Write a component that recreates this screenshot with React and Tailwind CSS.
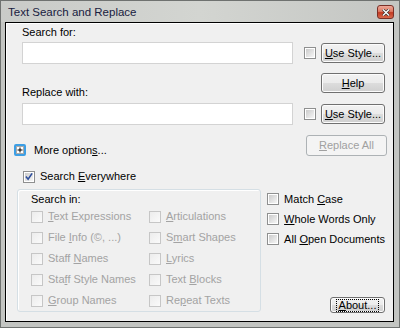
import React from 'react';

const U = ({ children }) => <span className="underline underline-offset-[1px]">{children}</span>;

function CheckBox({ checked, disabled }) {
  if (disabled) {
    return <div className="w-[12px] h-[12px] shrink-0 border border-[#c6c6c6] bg-gradient-to-br from-[#ececec] to-[#fafafa]" />;
  }
  return (
    <div className="w-[12px] h-[12px] shrink-0 border border-[#8e8f8f] bg-white p-[1px]">
      <div className="w-full h-full bg-gradient-to-br from-[#cbcbcb] to-[#f6f6f6] flex items-center justify-center">
        {checked && (
          <svg width="9" height="9" viewBox="0 0 9 9">
            <path d="M1 4.5 L3.5 7.5 L8 1" fill="none" stroke="#2d4e9c" strokeWidth="1.8" />
          </svg>
        )}
      </div>
    </div>
  );
}

function Btn({ children, className = '', disabled, focus }) {
  if (disabled) {
    return (
      <div className={`flex items-center justify-center rounded-[3px] border border-[#adb2b5] bg-[#f4f4f4] text-[#a0a0a0] ${className}`}>
        {children}
      </div>
    );
  }
  return (
    <div className={`rounded-[3px] border border-[#707070] shadow-[inset_0_0_0_1px_#fcfcfc] bg-[linear-gradient(to_bottom,#f2f2f2_0%,#ebebeb_50%,#dddddd_50%,#cfcfcf_100%)] flex items-center justify-center text-black ${className}`}>
      {focus ? (
        <span className="border border-dotted border-black px-[2px] leading-[11px]">{children}</span>
      ) : (
        children
      )}
    </div>
  );
}

function Row({ label, disabled, checked, className = '' }) {
  return (
    <div className={`flex items-center gap-[5px] ${disabled ? 'text-[#a3a3a3]' : 'text-black'} ${className}`}>
      <CheckBox disabled={disabled} checked={checked} />
      <span className="leading-[13px] whitespace-nowrap">{label}</span>
    </div>
  );
}

export default function App() {
  return (
    <div className="w-[400px] h-[328px] bg-[#c3c5c2] border border-[#6f7270] flex flex-col font-['Liberation_Sans',Arial,sans-serif] text-[11px] overflow-hidden">
      {/* title bar */}
      <div className="h-[21px] shrink-0 flex items-start justify-between bg-gradient-to-r from-[#c9cbc8] via-[#d3d5d1] to-[#c4c6c3]">
        <span className="ml-[7px] mt-[4px] text-[11.5px] leading-[15px] text-[#182040]">Text Search and Replace</span>
        <div className="mr-[5px] mt-[4px] w-[17px] h-[14px] rounded-[3px] border border-[#7a3028] bg-[linear-gradient(to_bottom,#eea898_0%,#de7a64_45%,#c23a22_55%,#d8684c_100%)] flex items-center justify-center">
          <svg width="8" height="7" viewBox="0 0 8 7">
            <path d="M1 0.5 L7 6.5 M7 0.5 L1 6.5" stroke="#303030" strokeWidth="2.6" />
            <path d="M1 0.5 L7 6.5 M7 0.5 L1 6.5" stroke="#ffffff" strokeWidth="1.4" />
          </svg>
        </div>
      </div>

      {/* client area */}
      <div className="ml-[4px] w-[389px] h-[300px] border border-black bg-[#f0f0f0] shadow-[inset_1px_1px_0_#ffffff] flex flex-col">
        {/* top section */}
        <div className="flex pl-[16px]">
          <div className="w-[271px] pt-[3px] flex flex-col">
            <div className="h-[13px] leading-[13px]">Search for:</div>
            <div className="mt-[3px] h-[22px] border border-[#d3d3d3] bg-white" />
            <div className="mt-[22px] h-[13px] leading-[13px]">Replace with:</div>
            <div className="mt-[4px] h-[22px] border border-[#d3d3d3] bg-white" />
          </div>
          <div className="ml-[11px] pt-[20px] flex flex-col">
            <div className="flex items-center h-[20px]">
              <CheckBox />
              <Btn className="ml-[5px] w-[64px] h-[20px]"><span><U>U</U>se Style...</span></Btn>
            </div>
            <div className="mt-[10px] flex justify-end">
              <Btn className="w-[64px] h-[20px]"><span><U>H</U>elp</span></Btn>
            </div>
            <div className="mt-[11px] flex items-center h-[20px]">
              <CheckBox />
              <Btn className="ml-[5px] w-[64px] h-[20px]"><span><U>U</U>se Style...</span></Btn>
            </div>
          </div>
        </div>

        {/* more options / replace all */}
        <div className="mt-[11px] h-[20px] flex items-end justify-between pl-[8px] pr-[6px]">
          <div className="flex items-center gap-[8px]">
            <div className="w-[12px] h-[12px] rounded-[2px] border-2 border-[#3c9ee4] bg-white flex items-center justify-center">
              <svg width="8" height="8" viewBox="0 0 8 8">
                <rect x="0.5" y="0.5" width="7" height="7" fill="none" stroke="#555" strokeWidth="1" strokeDasharray="1 1" />
                <path d="M4 1.5 V6.5 M1.5 4 H6.5" stroke="#000" strokeWidth="1" />
              </svg>
            </div>
            <span className="leading-[13px] mb-[-1px]">More option<U>s</U>...</span>
          </div>
          <Btn disabled className="w-[81px] h-[21px]"><span><U>R</U>eplace All</span></Btn>
        </div>

        {/* search everywhere */}
        <Row className="mt-[14px] pl-[17px]" checked label={<>Search <U>E</U>verywhere</>} />

        {/* bottom section */}
        <div className="mt-[6px] flex pl-[11px]">
          <div className="w-[248px] h-[123px] rounded-[3px] border border-[#d5dfe5] shadow-[inset_1px_1px_0_#ffffff] pl-[13px] pt-[3px]">
            <div className="h-[13px] leading-[13px] text-black">Search in:</div>
            <div className="flex">
              <div className="w-[118px] flex flex-col">
                <Row disabled className="h-[21px]" label={<><U>T</U>ext Expressions</>} />
                <Row disabled className="h-[21px]" label={<>File <U>I</U>nfo (©, ...)</>} />
                <Row disabled className="h-[21px]" label={<>Staff <U>N</U>ames</>} />
                <Row disabled className="h-[21px]" label={<>Sta<U>f</U>f Style Names</>} />
                <Row disabled className="h-[21px]" label={<><U>G</U>roup Names</>} />
              </div>
              <div className="flex flex-col">
                <Row disabled className="h-[21px]" label={<><U>A</U>rticulations</>} />
                <Row disabled className="h-[21px]" label={<>S<U>m</U>art Shapes</>} />
                <Row disabled className="h-[21px]" label={<><U>L</U>yrics</>} />
                <Row disabled className="h-[21px]" label={<>Text <U>B</U>locks</>} />
                <Row disabled className="h-[21px]" label={<>Re<U>p</U>eat Texts</>} />
              </div>
            </div>
          </div>
          <div className="ml-[6px] flex-1 pr-[8px] flex flex-col h-[124px]">
            <Row className="h-[20px]" label={<>Match <U>C</U>ase</>} />
            <Row className="h-[20px]" label={<><U>W</U>hole Words Only</>} />
            <Row className="h-[20px]" label={<>All <U>O</U>pen Documents</>} />
            <div className="mt-auto flex justify-end">
              <Btn focus className="w-[55px] h-[16px]"><span><U>A</U>bout...</span></Btn>
            </div>
          </div>
        </div>
      </div>
    </div>
  );
}
